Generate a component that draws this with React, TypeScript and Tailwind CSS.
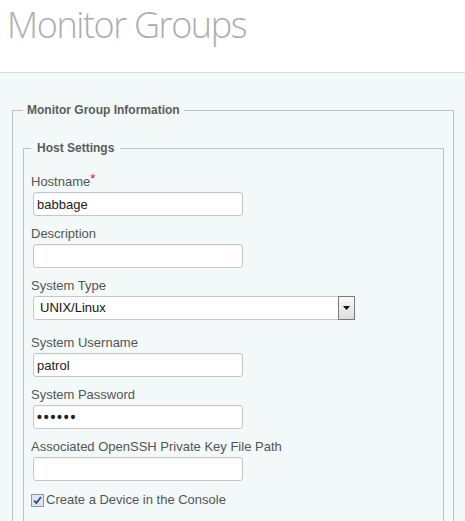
import React from "react";

const sans = "font-['Liberation_Sans',Arial,Helvetica,sans-serif]";

function Field({
  label,
  required,
  children,
  last,
}: {
  label: string;
  required?: boolean;
  children: React.ReactNode;
  last?: boolean;
}) {
  return (
    <div className={last ? "mb-[14px]" : "mb-[9px]"}>
      <label className="block text-[13px] leading-[17px] text-[#555]">
        {label}
        {required && <span className="relative -top-[3px] text-[#e01010]">*</span>}
      </label>
      {children}
    </div>
  );
}

function TextInput({ value, type = "text" }: { value?: string; type?: string }) {
  const pw = type === "password";
  return (
    <input
      type={type}
      defaultValue={value}
      className={`${sans} ml-[2px] mt-[2px] block h-[24px] w-[210px] rounded-[3px] border border-[#c6c6c6] bg-white px-[3px] text-[#222] shadow-[inset_0_1px_1px_rgba(0,0,0,0.04)] outline-none ${
        pw ? "text-[14px] font-bold tracking-[1.8px]" : "text-[13px]"
      }`}
    />
  );
}

function SystemSelect() {
  return (
    <div className="ml-[2px] mt-[2px] flex h-[24px] w-[322px] items-stretch rounded-[3px] border border-[#c6c6c6] bg-white">
      <span className="flex flex-1 items-center pl-[6px] text-[13px] text-[#111]">UNIX/Linux</span>
      <span className="my-[-1px] mr-[-1px] flex w-[17px] items-center justify-center border border-[#7a7a7a] bg-gradient-to-b from-[#fafafa] to-[#dcdcdc]">
        <svg width="7" height="4" viewBox="0 0 7 4">
          <path d="M0 0h7L3.5 4z" fill="#111" />
        </svg>
      </span>
    </div>
  );
}

export default function App() {
  return (
    <div className={`${sans} min-h-[521px] bg-[#f2f9f8]`}>
      <header className="h-[73px] border-b border-[#dcdcdc] bg-white pl-[7px] pt-[5px]">
        <h1 className="font-['Open_Sans',sans-serif] text-[36px] font-light leading-[40px] tracking-[-1.4px] text-[#adadad]">
          Monitor Groups
        </h1>
      </header>

      <fieldset className="ml-[12px] mr-[11px] mt-[29px] border border-[#c0c0c0] pb-[40px] pl-[10px] pr-[9px] pt-[22px]">
        <legend className="px-[4px] text-[12px] font-bold leading-[16px] text-[#5c5c5c]">
          Monitor Group Information
        </legend>

        <fieldset className="border border-[#c0c0c0] pb-[30px] pl-[7px] pr-[7px] pt-[17px]">
          <legend className="px-[6px] text-[12px] font-bold leading-[16px] text-[#5c5c5c]">
            Host Settings
          </legend>

          <Field label="Hostname" required>
            <TextInput value="babbage" />
          </Field>
          <Field label="Description">
            <TextInput />
          </Field>
          <Field label="System Type" last>
            <SystemSelect />
          </Field>
          <Field label="System Username">
            <TextInput value="patrol" />
          </Field>
          <Field label="System Password">
            <TextInput value="patrol" type="password" />
          </Field>
          <Field label="Associated OpenSSH Private Key File Path">
            <TextInput />
          </Field>

          <div className="mt-[11px] flex items-center gap-[2px] text-[13px] leading-[16px] text-[#555]">
            <span className="flex h-[13px] w-[13px] items-center justify-center border border-[#8d98a8] bg-[#dfe5ee]">
              <svg width="9" height="9" viewBox="0 0 9 9">
                <path d="M1 4.5l2.3 2.6L8 1" fill="none" stroke="#2c4a86" strokeWidth="1.8" />
              </svg>
            </span>
            <span>Create a Device in the Console</span>
          </div>
        </fieldset>
      </fieldset>
    </div>
  );
}
